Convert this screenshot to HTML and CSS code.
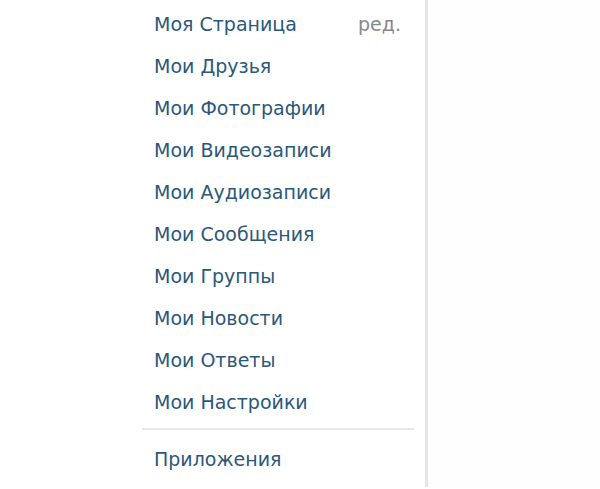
FILE: index.html
```html
<!DOCTYPE html>
<html>
<head>
    <title>Меню</title>
    <link rel="stylesheet" href="styles.css">
</head>
<body>
<div class="layout">
    <div class="side-menu">
        <ul class="menu-list">
            <li class="menu-item"><a href="#">Моя Страница</a><a href="#" class="edit-link">ред.</a></li>
            <li class="menu-item"><a href="#">Мои Друзья</a></li>
            <li class="menu-item"><a href="#">Мои Фотографии</a></li>
            <li class="menu-item"><a href="#">Мои Видеозаписи</a></li>
            <li class="menu-item"><a href="#">Мои Аудиозаписи</a></li>
            <li class="menu-item"><a href="#">Мои Сообщения</a></li>
            <li class="menu-item"><a href="#">Мои Группы</a></li>
            <li class="menu-item"><a href="#">Мои Новости</a></li>
            <li class="menu-item"><a href="#">Мои Ответы</a></li>
            <li class="menu-item"><a href="#">Мои Настройки</a></li>
        </ul>
        <div class="menu-divider"></div>
        <ul class="menu-list">
            <li class="menu-item"><a href="#">Приложения</a></li>
        </ul>
    </div>
    <div class="content"></div>
</div>
</body>
</html>
```

FILE: styles.css
```css
body {
    margin: 0;
    background-color: #fff;
    font-family: "DejaVu Sans", Verdana, sans-serif;
}

.layout {
    display: flex;
    height: 489px;
}

.side-menu {
    width: 272px;
    margin-left: 142px;
    padding-top: 3px;
}

.menu-list {
    list-style: none;
    margin: 0;
    padding: 0;
}

.menu-item {
    display: flex;
    justify-content: space-between;
    height: 42px;
    line-height: 42px;
    padding: 0 13px 0 12px;
    font-size: 19px;
}

.menu-item a {
    color: #2b587a;
    text-decoration: none;
}

.menu-item a.edit-link {
    color: #888;
}

.menu-divider {
    height: 2px;
    margin: 5px 0 8px;
    background-color: #e7e8ec;
}

.content {
    flex: 1;
    height: 487px;
    margin-left: 11px;
    border-left: 3px solid #e6e6e6;
    background-color: #fefefe;
}
```
